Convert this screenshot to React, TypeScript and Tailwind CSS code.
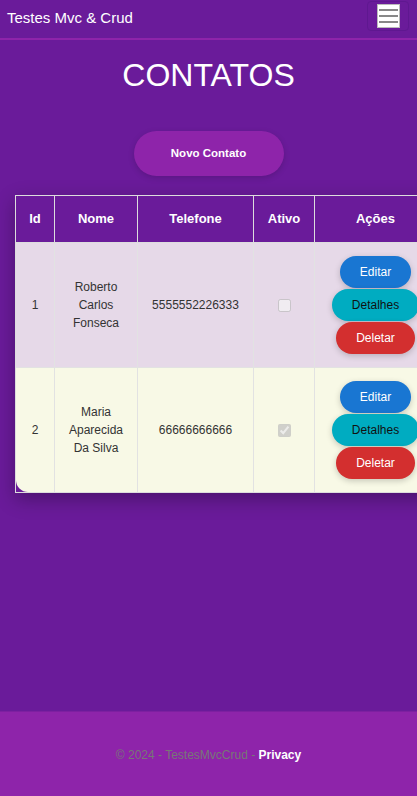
const contatos = [
  { id: 1, nome: 'Roberto Carlos Fonseca', telefone: '5555552226333', ativo: false },
  { id: 2, nome: 'Maria Aparecida Da Silva', telefone: '66666666666', ativo: true },
];

export default function App() {
  return (
    <div className="min-h-screen w-full overflow-hidden flex flex-col bg-[#6a1b9a] font-['Liberation_Sans',Arial,sans-serif]">
      {/* Navbar */}
      <nav className="h-[40px] flex items-center justify-between pl-[7px] pr-[8px] border-b-2 border-[#8e24aa]">
        <span className="text-[15px] text-white leading-none -mt-[4px]">Testes Mvc &amp; Crud</span>
        <button className="w-[42px] h-[30px] -mt-[7px] flex items-center justify-center rounded border border-[#5f1890]">
          <span className="w-[23px] h-[24px] bg-white border border-[#bbb] flex flex-col items-center justify-center gap-[4px]">
            <span className="w-[19px] h-[2px] bg-[#888]"></span>
            <span className="w-[19px] h-[2px] bg-[#888]"></span>
            <span className="w-[19px] h-[2px] bg-[#888]"></span>
          </span>
        </button>
      </nav>

      {/* Content */}
      <main className="flex-1 flex flex-col">
        <h1 className="mt-[17px] text-center text-white text-[32px] leading-[36px]">CONTATOS</h1>

        <div className="mt-[38px] flex justify-center">
          <button className="w-[150px] h-[45px] rounded-full bg-[#8e24aa] text-white text-[11.5px] font-bold shadow-[0_2px_6px_rgba(0,0,0,0.15)]">
            Novo Contato
          </button>
        </div>

        <div className="mt-[19px] ml-[15px] w-[422px] shrink-0 border border-[#ddd] bg-[#6a1b9a] shadow-[0_6px_18px_rgba(0,0,0,0.3)]">
          <table className="w-[420px] table-fixed border-separate border-spacing-0">
            <colgroup>
              <col className="w-[39px]" />
              <col className="w-[83px]" />
              <col className="w-[116px]" />
              <col className="w-[61px]" />
              <col className="w-[121px]" />
            </colgroup>
            <thead>
              <tr className="h-[47px]">
                <th className="border-r border-b border-[#ddd] text-white text-[13px] font-bold">Id</th>
                <th className="border-r border-b border-[#ddd] text-white text-[13px] font-bold">Nome</th>
                <th className="border-r border-b border-[#ddd] text-white text-[13px] font-bold">Telefone</th>
                <th className="border-r border-b border-[#ddd] text-white text-[13px] font-bold">Ativo</th>
                <th className="border-b border-[#ddd] text-white text-[13px] font-bold">Ações</th>
              </tr>
            </thead>
            <tbody>
              {contatos.map((c, i) => {
                const last = i === contatos.length - 1;
                const bg = i % 2 === 0 ? 'bg-[#e6d9e8]' : 'bg-[#f8f9e6]';
                const bb = last ? '' : 'border-b';
                return (
                  <tr key={c.id} className={last ? 'h-[124px]' : 'h-[125px]'}>
                    <td className={`${bg} ${bb} ${last ? 'rounded-bl-[12px]' : ''} border-r border-[#e2e2e2] text-center text-[12px] text-[#333]`}>
                      {c.id}
                    </td>
                    <td className={`${bg} ${bb} border-r border-[#e2e2e2] px-3 text-center text-[12px] leading-[18px] text-[#333]`}>
                      {c.nome}
                    </td>
                    <td className={`${bg} ${bb} border-r border-[#e2e2e2] text-center text-[12px] text-[#333]`}>
                      {c.telefone}
                    </td>
                    <td className={`${bg} ${bb} border-r border-[#e2e2e2] text-center`}>
                      <input type="checkbox" disabled defaultChecked={c.ativo} className="w-[13px] h-[13px] align-middle" />
                    </td>
                    <td className={`${bg} ${bb} border-[#e2e2e2]`}>
                      <div className="flex flex-col items-center gap-px">
                        <button className="h-8 px-5 rounded-full bg-[#1976d2] text-white text-[12px] shadow-[0_2px_6px_rgba(0,0,0,0.2)]">
                          Editar
                        </button>
                        <button className="h-8 px-5 rounded-full bg-[#00acc1] text-[#111] text-[12px] shadow-[0_2px_6px_rgba(0,0,0,0.2)]">
                          Detalhes
                        </button>
                        <button className="h-8 px-5 rounded-full bg-[#d32f2f] text-white text-[12px] shadow-[0_2px_6px_rgba(0,0,0,0.2)]">
                          Deletar
                        </button>
                      </div>
                    </td>
                  </tr>
                );
              })}
            </tbody>
          </table>
        </div>
      </main>

      {/* Footer */}
      <footer className="h-[85px] shrink-0 flex items-center justify-center bg-[#8e24aa] border-t border-[#7d20a0] text-[12px] pt-[2px]">
        <span className="text-[#777]">
          © 2024 - TestesMvcCrud - <span className="text-white font-bold">Privacy</span>
        </span>
      </footer>
    </div>
  );
}
